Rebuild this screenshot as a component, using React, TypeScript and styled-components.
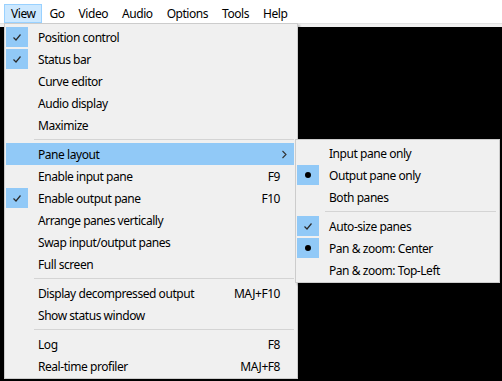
import React from "react";
import styled, { createGlobalStyle } from "styled-components";

const GlobalStyle = createGlobalStyle`
  html, body { margin: 0; padding: 0; background: #000; }
  body { font-family: "Noto Sans", "Open Sans", sans-serif; }
`;

const Page = styled.div`
  position: relative;
  width: 502px;
  height: 381px;
  background: #000;
  overflow: hidden;
  font-family: "Noto Sans", "Open Sans", sans-serif;
  font-size: 12px;
  letter-spacing: -0.45px;
  color: #000;
`;

const MenuBar = styled.div`
  display: flex;
  height: 23px;
  box-sizing: border-box;
  padding: 4px 0 0 4px;
  background: #fff;
`;

const BarItem = styled.div<{ $active?: boolean }>`
  height: 19px;
  box-sizing: border-box;
  padding: 0 6px;
  display: flex;
  align-items: center;
  border: 1px solid ${(p) => (p.$active ? "#99d1ff" : "transparent")};
  background: ${(p) => (p.$active ? "#cce8ff" : "transparent")};
`;

const BarEdge = styled.div`
  height: 4px;
  box-sizing: border-box;
  background: #f0f0f0;
  border-top: 1px solid #e2e2e2;
`;

const Menu = styled.div<{ $left: number; $top: number; $width: number }>`
  position: absolute;
  left: ${(p) => p.$left}px;
  top: ${(p) => p.$top}px;
  width: ${(p) => p.$width}px;
  box-sizing: border-box;
  background: #f0f0f0;
  border: 1px solid #cccccc;
  padding: 2px 3px 1px 1px;
  box-shadow: 2px 2px 2px rgba(0, 0, 0, 0.25);
  display: flex;
  flex-direction: column;
`;

const Row = styled.div<{ $hot?: boolean }>`
  height: 22px;
  display: flex;
  align-items: center;
  background: ${(p) => (p.$hot ? "#91c9f7" : "transparent")};
  padding-right: 14px;
`;

const Mark = styled.div<{ $on?: boolean }>`
  width: 22px;
  height: 20px;
  flex: none;
  display: flex;
  align-items: center;
  justify-content: center;
  background: ${(p) => (p.$on ? "#91c9f7" : "transparent")};
`;

const Label = styled.span`
  flex: 1;
  margin-left: 10px;
  white-space: nowrap;
`;

const Shortcut = styled.span`
  white-space: nowrap;
`;

const Arrow = styled.span`
  display: flex;
  margin-right: -8px;
`;

const Separator = styled.div`
  height: 7px;
  display: flex;
  flex-direction: column;
  justify-content: flex-start;
  padding: 3px 0 0 28px;
  box-sizing: border-box;
  &::after {
    content: "";
    display: block;
    height: 1px;
    background: #d4d4d4;
  }
`;

const Dot = styled.span`
  width: 6px;
  height: 6px;
  border-radius: 50%;
  background: #000;
`;

const Check = () => (
  <svg width="22" height="20" viewBox="0 0 22 20">
    <path d="M7.5 10.5 L10 13 L14.5 7.5" fill="none" stroke="#2a2a2a" strokeWidth="1.2" />
  </svg>
);

const Chevron = () => (
  <svg width="8" height="9" viewBox="0 0 8 9">
    <path d="M2.5 1 L6 4.5 L2.5 8" fill="none" stroke="#333" strokeWidth="1.1" />
  </svg>
);

type Item =
  | { sep: true }
  | { sep?: false; label: string; mark?: "check" | "dot"; shortcut?: string; sub?: boolean; hot?: boolean };

const viewItems: Item[] = [
  { label: "Position control", mark: "check" },
  { label: "Status bar", mark: "check" },
  { label: "Curve editor" },
  { label: "Audio display" },
  { label: "Maximize" },
  { sep: true },
  { label: "Pane layout", sub: true, hot: true },
  { label: "Enable input pane", shortcut: "F9" },
  { label: "Enable output pane", shortcut: "F10", mark: "check" },
  { label: "Arrange panes vertically" },
  { label: "Swap input/output panes" },
  { label: "Full screen" },
  { sep: true },
  { label: "Display decompressed output", shortcut: "MAJ+F10" },
  { label: "Show status window" },
  { sep: true },
  { label: "Log", shortcut: "F8" },
  { label: "Real-time profiler", shortcut: "MAJ+F8" },
];

const paneItems: Item[] = [
  { label: "Input pane only" },
  { label: "Output pane only", mark: "dot" },
  { label: "Both panes" },
  { sep: true },
  { label: "Auto-size panes", mark: "check" },
  { label: "Pan & zoom: Center", mark: "dot" },
  { label: "Pan & zoom: Top-Left" },
];

const MenuItems = ({ items }: { items: Item[] }) => (
  <>
    {items.map((it, i) =>
      it.sep ? (
        <Separator key={i} />
      ) : (
        <Row key={i} $hot={it.hot}>
          <Mark $on={!!it.mark}>
            {it.mark === "check" && <Check />}
            {it.mark === "dot" && <Dot />}
          </Mark>
          <Label>{it.label}</Label>
          {it.shortcut && <Shortcut>{it.shortcut}</Shortcut>}
          {it.sub && (
            <Arrow>
              <Chevron />
            </Arrow>
          )}
        </Row>
      )
    )}
  </>
);

export default function App() {
  return (
    <Page>
      <GlobalStyle />
      <MenuBar>
        <BarItem $active>View</BarItem>
        <BarItem>Go</BarItem>
        <BarItem>Video</BarItem>
        <BarItem>Audio</BarItem>
        <BarItem>Options</BarItem>
        <BarItem>Tools</BarItem>
        <BarItem>Help</BarItem>
      </MenuBar>
      <BarEdge />
      <Menu $left={4} $top={23} $width={294}>
        <MenuItems items={viewItems} />
      </Menu>
      <Menu $left={295} $top={139} $width={205}>
        <MenuItems items={paneItems} />
      </Menu>
    </Page>
  );
}
